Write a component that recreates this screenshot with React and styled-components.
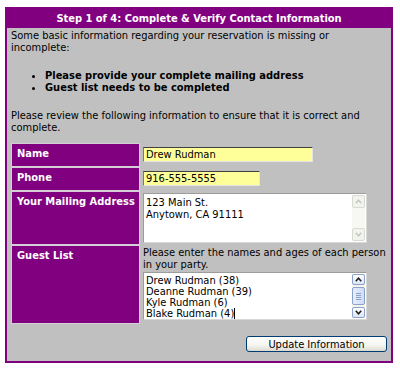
import React from "react";
import styled, { createGlobalStyle } from "styled-components";

const GlobalStyle = createGlobalStyle`
  html, body { margin: 0; padding: 0; background: #ffffff; }
  body {
    font-family: "DejaVu Sans Condensed", "DejaVu Sans", sans-serif;
    font-stretch: condensed;
    font-size: 11px;
    color: #000;
  }
`;

const Frame = styled.div`
  box-sizing: border-box;
  margin: 7px 0 0 5px;
  width: 388px;
  height: 356px;
  border: 2px solid #800080;
  background: #c0c0c0;
  display: flex;
  flex-direction: column;
`;

const Header = styled.div`
  height: 19px;
  line-height: 19px;
  background: #800080;
  color: #ffffff;
  font-weight: bold;
  font-size: 11px;
  text-align: center;
`;

const Body = styled.div`
  padding: 2px 4px 0 4px;
  display: flex;
  flex-direction: column;
`;

const Para = styled.p`
  margin: 0;
  line-height: 12px;
`;

const Bullets = styled.ul`
  margin: 16px 0;
  padding-left: 34px;
  font-weight: bold;
  line-height: 12px;
  list-style: disc;
`;

const FormGrid = styled.div`
  margin: 10px 0 0 1px;
  display: grid;
  grid-template-columns: 127px 247px;
  grid-template-rows: 22px 22px 52px 77px;
  gap: 2px;
`;

const LabelCell = styled.div`
  box-sizing: border-box;
  background: #800080;
  color: #ffffff;
  font-weight: bold;
  line-height: 12px;
  padding: 4px 2px 4px 5px;
  white-space: nowrap;
  box-shadow: 0 0 0 1px #d6ced6;
`;

const ValueCell = styled.div`
  box-sizing: border-box;
  padding: ${(p) => p.$pad || "3px 2px"};
  line-height: 12px;
  display: flex;
  flex-direction: column;
`;

const TextInput = styled.div`
  box-sizing: border-box;
  width: ${(p) => p.$w}px;
  height: 15px;
  background: #ffff99;
  border-top: 1px solid #404040;
  border-left: 1px solid #7a7a7a;
  border-right: 1px solid #e4e4e4;
  border-bottom: 1px solid #e4e4e4;
  padding: 0 2px;
  line-height: 13px;
  white-space: nowrap;
  overflow: hidden;
`;

const TextArea = styled.div`
  box-sizing: border-box;
  width: 224px;
  height: ${(p) => p.$h}px;
  margin-top: ${(p) => p.$mt || 0}px;
  background: #ffffff;
  border: 1px solid #9c9c9c;
  border-right-color: #d8d8d8;
  border-bottom-color: #d8d8d8;
  display: flex;
`;

const AreaText = styled.div`
  flex: 1;
  padding: ${(p) => p.$pad || "3px 2px"};
  line-height: ${(p) => p.$lh}px;
  white-space: pre;
  overflow: hidden;
`;

const Caret = styled.span`
  display: inline-block;
  width: 1px;
  height: 11px;
  background: #000;
  vertical-align: -2px;
`;

const ScrollBar = styled.div`
  width: 13px;
  margin: 1px 1px 1px 0;
  display: flex;
  flex-direction: column;
  background: ${(p) => (p.$disabled ? "#f7f7f3" : "#f4f4f0")};
`;

const ScrollButton = styled.div`
  box-sizing: border-box;
  height: 13px;
  border: 1px solid ${(p) => (p.$disabled ? "#d6dbd2" : "#8da2c8")};
  border-radius: 2px;
  background: ${(p) =>
    p.$disabled ? "#f3f3ee" : "linear-gradient(#ffffff, #dde6f6)"};
  display: flex;
  align-items: center;
  justify-content: center;
`;

const Track = styled.div`
  flex: 1;
  display: flex;
  flex-direction: column;
  padding: 2px 0;
`;

const Thumb = styled.div`
  box-sizing: border-box;
  height: 18px;
  border: 1px solid #8da2c8;
  border-radius: 2px;
  background: linear-gradient(90deg, #e6eefc, #cfdcf5);
  display: flex;
  flex-direction: column;
  align-items: center;
  justify-content: center;
  gap: 1px;
`;

const Grip = styled.div`
  width: 5px;
  height: 1px;
  background: #8da2c8;
`;

const Hint = styled.div`
  line-height: 12px;
`;

const ButtonRow = styled.div`
  display: flex;
  justify-content: flex-end;
  margin-top: 13px;
`;

const UpdateButton = styled.button`
  box-sizing: border-box;
  width: 141px;
  height: 16px;
  padding: 0;
  border: 1px solid #003c74;
  border-radius: 3px;
  background: linear-gradient(#ffffff 0%, #f4f4f0 60%, #dcdad0 100%);
  font-family: inherit;
  font-stretch: condensed;
  font-size: 11px;
  line-height: 13px;
  color: #000;
`;

const Chevron = ({ up, disabled }) => (
  <svg width="7" height="5" viewBox="0 0 7 5">
    <path
      d={up ? "M0.8 4.2 L3.5 1.2 L6.2 4.2" : "M0.8 0.8 L3.5 3.8 L6.2 0.8"}
      fill="none"
      stroke={disabled ? "#c4c9c0" : "#1a1a1a"}
      strokeWidth="1.5"
    />
  </svg>
);

export default function App() {
  return (
    <>
      <GlobalStyle />
      <Frame>
        <Header>Step 1 of 4: Complete &amp; Verify Contact Information</Header>
        <Body>
          <Para>
            Some basic information regarding your reservation is missing or
            incomplete:
          </Para>
          <Bullets>
            <li>Please provide your complete mailing address</li>
            <li>Guest list needs to be completed</li>
          </Bullets>
          <Para>
            Please review the following information to ensure that it is
            correct and complete.
          </Para>
          <FormGrid>
            <LabelCell>Name</LabelCell>
            <ValueCell>
              <TextInput $w={170}>Drew Rudman</TextInput>
            </ValueCell>
            <LabelCell>Phone</LabelCell>
            <ValueCell>
              <TextInput $w={117}>916-555-5555</TextInput>
            </ValueCell>
            <LabelCell>Your Mailing Address</LabelCell>
            <ValueCell $pad="1px 2px">
              <TextArea $h={50}>
                <AreaText $lh={12}>{"123 Main St.\nAnytown, CA 91111"}</AreaText>
                <ScrollBar $disabled>
                  <ScrollButton $disabled>
                    <Chevron up disabled />
                  </ScrollButton>
                  <Track />
                  <ScrollButton $disabled>
                    <Chevron disabled />
                  </ScrollButton>
                </ScrollBar>
              </TextArea>
            </ValueCell>
            <LabelCell>Guest List</LabelCell>
            <ValueCell $pad="1px 0 1px 2px">
              <Hint>
                Please enter the names and ages of each person in your party.
              </Hint>
              <TextArea $h={48} $mt={1}>
                <AreaText $lh={11} $pad="2px 2px">
                  {"Drew Rudman (38)\nDeanne Rudman (39)\nKyle Rudman (6)\nBlake Rudman (4)"}
                  <Caret />
                </AreaText>
                <ScrollBar>
                  <ScrollButton>
                    <Chevron up />
                  </ScrollButton>
                  <Track>
                    <Thumb>
                      <Grip />
                      <Grip />
                      <Grip />
                      <Grip />
                    </Thumb>
                  </Track>
                  <ScrollButton>
                    <Chevron />
                  </ScrollButton>
                </ScrollBar>
              </TextArea>
            </ValueCell>
          </FormGrid>
          <ButtonRow>
            <UpdateButton>Update Information</UpdateButton>
          </ButtonRow>
        </Body>
      </Frame>
    </>
  );
}
